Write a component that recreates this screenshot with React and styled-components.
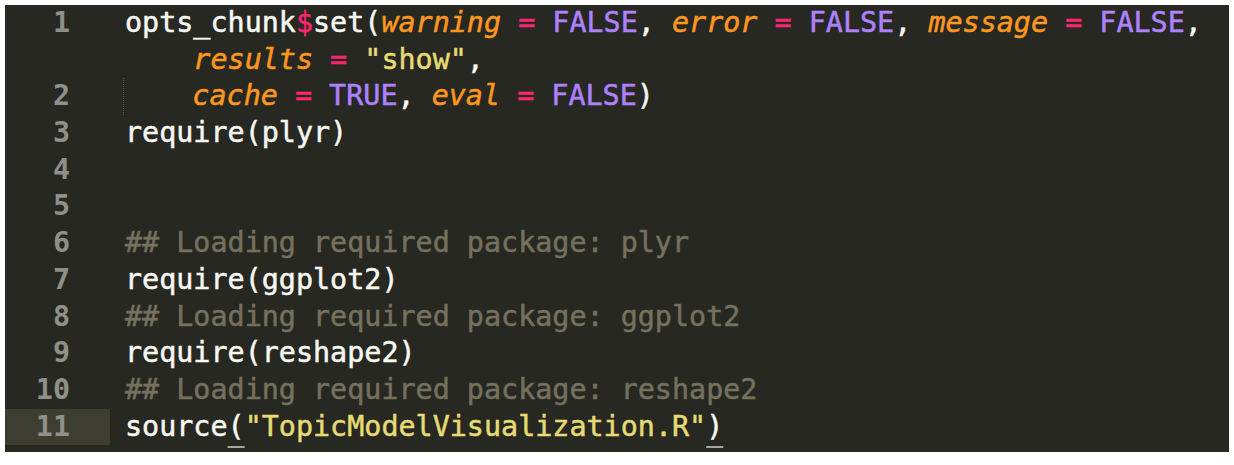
import React from "react";
import styled, { createGlobalStyle } from "styled-components";

const GlobalSt = createGlobalStyle`
  html, body {
    margin: 0;
    padding: 0;
    background: #ffffff;
  }
`

const EditorSt = styled.div`
  margin: 5px;
  width: 1224px;
  padding-bottom: 7px;
  background: #272822;
  font-family: "DejaVu Sans Mono", "Liberation Mono", monospace;
  font-size: 28.4px;
  line-height: 36.7px;
  color: #f8f8f2;
`

const RowSt = styled.div`
  display: grid;
  grid-template-columns: 105px 1fr;
  height: 36.7px;
`

const GutterSt = styled.div`
  text-align: right;
  padding-right: 40px;
  color: #8f908a;
  font-weight: 700;
  background: ${({ $active }) => ($active ? "#3e3d32" : "transparent")};
`

const CodeSt = styled.div`
  padding-left: 15px;
  white-space: pre;
  display: flex;
  -webkit-text-stroke: 0.5px currentColor;
`

const IndentSt = styled.span`
  display: inline-block;
  width: 4ch;
  margin-left: ${({ $guide }) => ($guide ? "-2px" : "0")};
  border-left: ${({ $guide }) => ($guide ? "1px dotted #5b5b52" : "none")};
`

const TokSt = styled.span`
  color: ${({ $c }) => $c};
  font-style: ${({ $i }) => ($i ? "italic" : "normal")};
`

const MatchSt = styled.span`
  text-decoration: underline;
  text-decoration-color: #a6a6a0;
  text-decoration-thickness: 2px;
  text-underline-offset: 10px;
`

const C = {
  txt: "#f8f8f2",
  pink: "#f92672",
  purple: "#ae81ff",
  orange: "#fd971f",
  yellow: "#e6db74",
  comment: "#75715e",
};

const T = ({ c = C.txt, i, children }) => <TokSt $c={c} $i={i}>{children}</TokSt>;
const Arg = ({ children }) => <T c={C.orange} i>{children}</T>;
const Eq = () => <T c={C.pink}> = </T>;
const Bool = ({ children }) => <T c={C.purple}>{children}</T>;

const lines = [
  {
    n: "1",
    code: (
      <>
        <T>opts_chunk</T><T c={C.pink}>$</T><T>set(</T>
        <Arg>warning</Arg><Eq /><Bool>FALSE</Bool><T>, </T>
        <Arg>error</Arg><Eq /><Bool>FALSE</Bool><T>, </T>
        <Arg>message</Arg><Eq /><Bool>FALSE</Bool><T>,</T>
      </>
    ),
  },
  {
    n: "",
    code: (
      <>
        <IndentSt />
        <Arg>results</Arg><Eq /><T c={C.yellow}>"show"</T><T>,</T>
      </>
    ),
  },
  {
    n: "2",
    code: (
      <>
        <IndentSt $guide />
        <Arg>cache</Arg><Eq /><Bool>TRUE</Bool><T>, </T>
        <Arg>eval</Arg><Eq /><Bool>FALSE</Bool><T>)</T>
      </>
    ),
  },
  { n: "3", code: <T>require(plyr)</T> },
  { n: "4", code: null },
  { n: "5", code: null },
  { n: "6", code: <T c={C.comment}>## Loading required package: plyr</T> },
  { n: "7", code: <T>require(ggplot2)</T> },
  { n: "8", code: <T c={C.comment}>## Loading required package: ggplot2</T> },
  { n: "9", code: <T>require(reshape2)</T> },
  { n: "10", code: <T c={C.comment}>## Loading required package: reshape2</T> },
  {
    n: "11",
    active: true,
    code: (
      <>
        <T>source</T><MatchSt>(</MatchSt>
        <T c={C.yellow}>"TopicModelVisualization.R"</T>
        <MatchSt>)</MatchSt>
      </>
    ),
  },
];

export default function App() {
  return (
    <>
      <GlobalSt />
      <EditorSt>
        {lines.map((line, idx) => (
          <RowSt key={idx}>
            <GutterSt $active={line.active}>{line.n}</GutterSt>
            <CodeSt>{line.code}</CodeSt>
          </RowSt>
        ))}
      </EditorSt>
    </>
  );
}
